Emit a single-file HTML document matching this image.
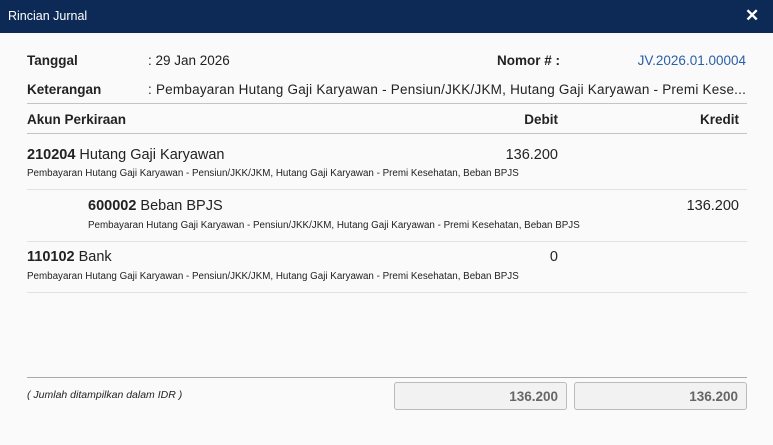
<!DOCTYPE html>
<html><head><style>
body{margin:0;width:773px;height:445px;background:#fafafa;font-family:"Liberation Sans",sans-serif;color:#222;position:relative;overflow:hidden}
.h{position:absolute;left:0;top:0;width:773px;height:33px;background:#0d2a56;color:#fff}
.a{position:absolute;white-space:nowrap}
.r{position:absolute;white-space:nowrap;text-align:right}
.b{font-weight:bold;font-size:13.5px}
.t{font-size:13.5px}
.l{position:absolute;height:1px;background:#c4c4c4}
.big{font-size:14.5px}
.sm{font-size:9.8px;color:#222}
.box{position:absolute;top:382px;height:28px;border:1px solid #bbb;border-radius:3px;background:#f2f2f2;box-sizing:border-box;text-align:right;padding-right:8px;line-height:27px;font-weight:bold;color:#666;font-size:13.5px}
</style></head><body>
<div class="h"><span class="a" style="left:8px;top:9px;font-size:12.5px">Rincian Jurnal</span><span class="a" style="left:745px;top:6px;font-size:17px;font-weight:bold">✕</span></div>
<span class="a b" style="left:27px;top:53px">Tanggal</span>
<span class="a t" style="left:148px;top:53px">: 29 Jan 2026</span>
<span class="a b" style="left:497px;top:53px">Nomor # :</span>
<span class="r t" style="right:27px;top:53px;color:#2b5fa6">JV.2026.01.00004</span>
<span class="a b" style="left:27px;top:82px">Keterangan</span>
<span class="a t" style="left:148px;top:82px;letter-spacing:0.22px">: Pembayaran Hutang Gaji Karyawan - Pensiun/JKK/JKM, Hutang Gaji Karyawan - Premi Kese...</span>
<div class="l" style="left:27px;top:103px;width:720px"></div>
<span class="a b" style="left:27px;top:112px">Akun Perkiraan</span>
<span class="r b" style="right:215px;top:112px">Debit</span>
<span class="r b" style="right:34px;top:112px">Kredit</span>
<div class="l" style="left:27px;top:133px;width:720px"></div>
<span class="a big" style="left:27px;top:147px"><b>210204</b> Hutang Gaji Karyawan</span>
<span class="r big" style="right:215px;top:147px">136.200</span>
<span class="a sm" style="left:27px;top:168px">Pembayaran Hutang Gaji Karyawan - Pensiun/JKK/JKM, Hutang Gaji Karyawan - Premi Kesehatan, Beban BPJS</span>
<div class="l" style="left:27px;top:189px;width:720px;background:#e2e2e2"></div>
<span class="a big" style="left:88px;top:198px"><b>600002</b> Beban BPJS</span>
<span class="r big" style="right:34px;top:198px">136.200</span>
<span class="a sm" style="left:88px;top:220px">Pembayaran Hutang Gaji Karyawan - Pensiun/JKK/JKM, Hutang Gaji Karyawan - Premi Kesehatan, Beban BPJS</span>
<div class="l" style="left:27px;top:241px;width:720px;background:#e2e2e2"></div>
<span class="a big" style="left:27px;top:249px"><b>110102</b> Bank</span>
<span class="r big" style="right:215px;top:249px">0</span>
<span class="a sm" style="left:27px;top:271px">Pembayaran Hutang Gaji Karyawan - Pensiun/JKK/JKM, Hutang Gaji Karyawan - Premi Kesehatan, Beban BPJS</span>
<div class="l" style="left:27px;top:292px;width:720px;background:#e2e2e2"></div>
<div class="l" style="left:27px;top:377px;width:720px;background:#aaa"></div>
<span class="a" style="left:27px;top:389px;font-size:10.5px;font-style:italic">( Jumlah ditampilkan dalam IDR )</span>
<div class="box" style="left:394px;width:173px">136.200</div>
<div class="box" style="left:574px;width:173px">136.200</div>
</body></html>
